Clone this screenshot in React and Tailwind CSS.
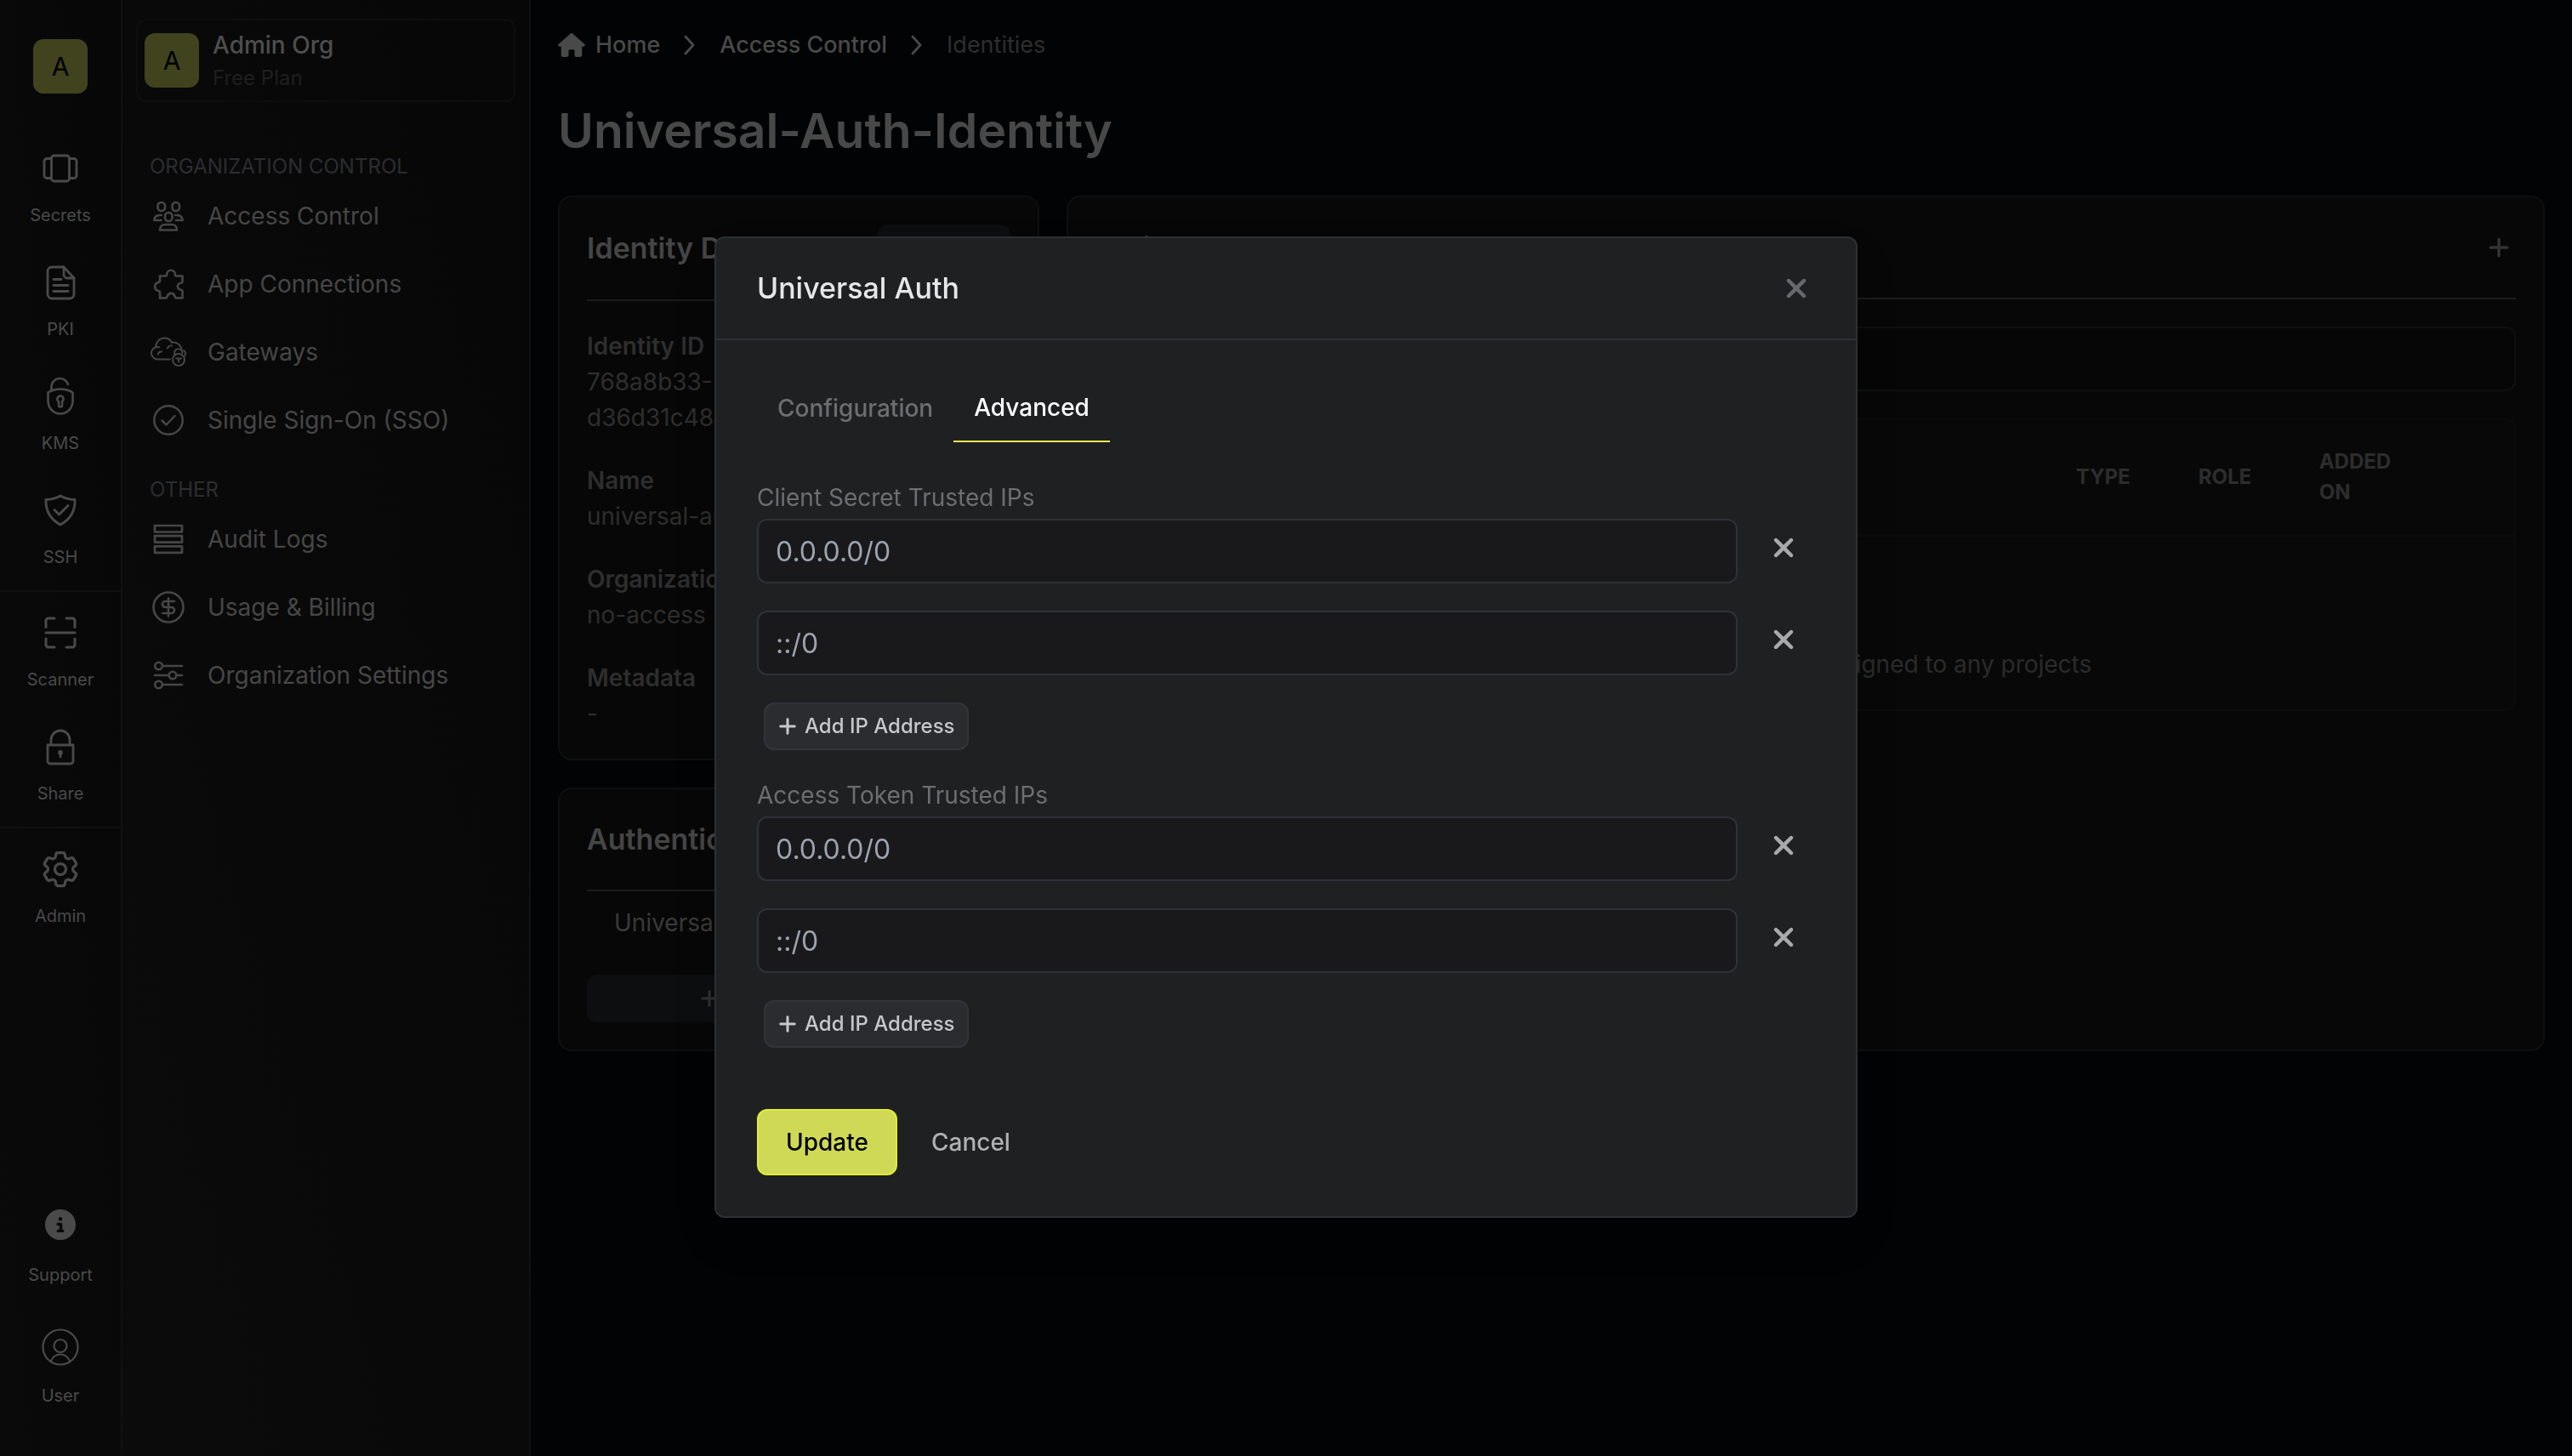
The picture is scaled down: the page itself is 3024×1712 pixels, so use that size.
import { CircleDollarSign } from "lucide-react";
import { FaChevronDown, FaCircleInfo, FaFolder, FaHouse, FaPlus, FaXmark } from "react-icons/fa6";
import { HiOutlineCog6Tooth } from "react-icons/hi2";

/* ---------- Icons ---------- */

const Svg = ({ size = "size-12", box = "0 0 48 48", stroke = 2.8, children }) => (
  <svg
    className={size + " shrink-0"}
    viewBox={box}
    fill="none"
    stroke="currentColor"
    strokeWidth={stroke}
    strokeLinecap="round"
    strokeLinejoin="round"
    aria-hidden="true"
  >
    {children}
  </svg>
);

const SecretsIcon = () => (
  <Svg>
    <rect x="13.5" y="9" width="21" height="30" rx="3" />
    <path d="M13 12.5H8a3 3 0 0 0-3 3v17a3 3 0 0 0 3 3h5M35 12.5h5a3 3 0 0 1 3 3v17a3 3 0 0 1-3 3h-5" />
  </Svg>
);

const PkiIcon = () => (
  <Svg>
    <path d="M28 6H14a5 5 0 0 0-5 5v27a5 5 0 0 0 5 5h21a5 5 0 0 0 5-5V19z" />
    <path d="M28 6v9a4 4 0 0 0 4 4h8M16 20.5h9M16 27.5h17M16 34.5h17" />
  </Svg>
);

const KmsIcon = () => (
  <Svg stroke={2.6}>
    <path d="M13.5 17.5V12A10 10 0 0 1 33 10" />
    <path d="M24 15.5c5 0 10.5 1.5 14.5 4V29c0 9-6.5 15.5-14.5 15.5S9.500 38 9.500 29v-9.500c4-2.500 9.500-4 14.500-4z" />
    <path d="M24 23.5a3.700 3.700 0 0 0-2 6.700v4.300a2 2 0 0 0 4 0v-4.300a3.700 3.700 0 0 0-2-6.700z" />
  </Svg>
);

const SshIcon = () => (
  <Svg>
    <path d="M24 7c5 3 10.500 4.300 17 4.500.5 13-5 23-17 29.500C12 34.500 6.500 24.500 7 11.500 13.500 11.300 19 10 24 7z" />
    <path d="m17 23.500 5.500 5.500L33 18.500" />
  </Svg>
);

const ScannerIcon = () => (
  <Svg stroke={3}>
    <path d="M7 17.500V10a3 3 0 0 1 3-3h7M31 7h7a3 3 0 0 1 3 3v7.500M41 31v7a3 3 0 0 1-3 3h-7M17 41h-7a3 3 0 0 1-3-3v-7M7 24h34" />
  </Svg>
);

const ShareIcon = () => (
  <Svg>
    <path d="M9 22h30v19a3 3 0 0 1-3 3H12a3 3 0 0 1-3-3zM13 22v-6a11 11 0 0 1 22 0v6" />
    <circle cx="24" cy="31" r="1.5" fill="currentColor" />
    <path d="M24 32v4" />
  </Svg>
);

const UserIcon = () => (
  <Svg stroke={2.2} box="0 -2 48 48">
    <circle cx="24" cy="24" r="20.5" />
    <circle cx="24" cy="22.5" r="7.5" />
    <path d="M13 40.500c2-5 6-8 11-8s9 3 11 8" />
  </Svg>
);

const AccessIcon = () => (
  <Svg size="size-9" box="0 0 36 36" stroke={2.6}>
    <rect x="5.5" y="2" width="8.5" height="10" rx="4" />
    <rect x="22.5" y="2" width="8.500" height="10" rx="4" />
    <rect x="14" y="14" width="8.500" height="10" rx="4" />
    <path d="M9.500 23H1.300c.2-4 3-6 7-6h1.500M27 23h7.700c-.2-4-3-6-7-6h-1.500M8 34.500c0-4.500 3-6.500 6.500-6.500h7c3.500 0 6.500 2 6.500 6.500z" />
  </Svg>
);

const AppsIcon = () => (
  <Svg size="size-9" box="0 0 36 36" stroke={2.6}>
    <path d="M8 8.500h6.500c1.200 0 1.700-.8 1.700-2a4.800 4.800 0 0 1 9.600 0c0 1.200.5 2 1.700 2h7V15c0 1-.6 1.500-1.600 1.700a4 4 0 0 0 0 8c1 .2 1.600.7 1.600 1.700v8h-7.500c-1 0-1.200-.8-1.500-2a4.500 4.500 0 0 0-8.800 0c-.3 1.200-.7 2-1.700 2H8V28c0-1.200-.6-1.800-1.700-2a5.100 5.100 0 0 1 0-10c1.100-.2 1.700-.8 1.700-2z" />
  </Svg>
);

const GatewaysIcon = () => (
  <Svg size="h-9 w-[42px]" box="0 0 42 36" stroke={2}>
    <path d="M23 26.500H8.500a7.300 7.300 0 0 1-2.300-14.300C6 7 10 1.500 16.500 1.500c4 0 7 2 8.500 5.300 5.500-1 11 2.700 11.500 8.700" />
    <path d="M9 20.500c0-2 1.500-3 4-3M20 13.500c.5-2 2.500-3.500 5-3M6.200 12.200c1.500-.5 2.500-.4 3.800 0" />
    <path d="M28 21v-2a4.700 4.700 0 0 1 9.400 0" />
    <circle cx="33" cy="27" r="7" />
    <path d="M30 25.500h6M33 25.500v4M40.500 22c1-2 .5-4.500-1.500-6" />
  </Svg>
);

const SsoIcon = () => (
  <Svg size="size-9" box="0 0 36 36" stroke={2.5}>
    <circle cx="18" cy="18" r="16.7" />
    <path d="m10.500 18.500 5 5 10-10.500" />
  </Svg>
);

const AuditIcon = () => (
  <Svg size="size-9" box="0 0 36 36" stroke={2.7}>
    <path d="M2 2h32v7.500H2zM2 14.200h32v7.500H2zM2 26.400h32v7.500H2z" />
  </Svg>
);

const BillingIcon = () => <CircleDollarSign className="size-[42px] shrink-0" strokeWidth={1.5} />;

const SettingsIcon = () => (
  <Svg size="size-9" box="0 0 36 36" stroke={2.6}>
    <circle cx="6.5" cy="7" r="4.3" />
    <circle cx="23" cy="18" r="4.3" />
    <circle cx="6.5" cy="29" r="4.3" />
    <path d="M11.500 7H34M2 18h16M28 18h6M11.500 29H34" />
  </Svg>
);

const CrumbArrow = () => (
  <Svg size="h-6 w-4" box="0 0 16 24">
    <path d="m3 2 9 10-9 10" />
  </Svg>
);

/* ---------- Data ---------- */

const railGroups = [
  [
    { label: "Secrets", Icon: SecretsIcon },
    { label: "PKI", Icon: PkiIcon },
    { label: "KMS", Icon: KmsIcon },
    { label: "SSH", Icon: SshIcon },
  ],
  [
    { label: "Scanner", Icon: ScannerIcon },
    { label: "Share", Icon: ShareIcon },
  ],
  [{ label: "Admin", Icon: () => <HiOutlineCog6Tooth className="size-13" /> }],
];

const menuSections = [
  {
    title: "ORGANIZATION CONTROL",
    items: [
      { label: "Access Control", Icon: AccessIcon },
      { label: "App Connections", Icon: AppsIcon },
      { label: "Gateways", Icon: GatewaysIcon },
      { label: "Single Sign-On (SSO)", Icon: SsoIcon },
    ],
  },
  {
    title: "OTHER",
    items: [
      { label: "Audit Logs", Icon: AuditIcon },
      { label: "Usage & Billing", Icon: BillingIcon },
      { label: "Organization Settings", Icon: SettingsIcon },
    ],
  },
];

const details = [
  { label: "Identity ID", value: "768a8b33-5c1e-4f0a-9b7d-d36d31c48a10" },
  { label: "Name", value: "universal-auth-identity" },
  { label: "Organization Role", value: "no-access" },
  { label: "Metadata", value: "-" },
];

const ipFields = [
  { id: "client-secret", label: "Client Secret Trusted IPs", values: ["0.0.0.0/0", "::/0"] },
  { id: "access-token", label: "Access Token Trusted IPs", values: ["0.0.0.0/0", "::/0"] },
];

/* ---------- Page parts ---------- */

const Avatar = () => (
  <div className="flex size-16 shrink-0 items-center justify-center rounded-xl bg-[#40431d] text-[30px] text-black">
    A
  </div>
);

const Rail = () => (
  <nav className="flex w-36 shrink-0 flex-col border-r-2 border-[#101112] bg-linear-to-tr from-[#0a0a0a] to-[#070708] pt-[46px] pb-9 text-xl leading-[30px] text-[#4a4a4a]">
    <div className="mb-10 flex justify-center">
      <Avatar />
    </div>

    {railGroups.map((group, i) => (
      <div key={i} className="border-b-2 border-[#101112] py-1 last-of-type:border-b-0">
        {group.map(({ label, Icon }) => (
          <a key={label} href="#" className="flex flex-col items-center gap-4 py-5">
            <span className="flex h-12 items-center">
              <Icon />
            </span>
            {label}
          </a>
        ))}
      </div>
    ))}

    <section className="mt-auto">
      <a href="#" className="flex flex-col items-center gap-4 py-5">
        <span className="flex h-14 items-center">
          <FaCircleInfo className="size-9" />
        </span>
        Support
      </a>
      <a href="#" className="flex flex-col items-center gap-4 py-5">
        <span className="flex h-14 items-center">
          <UserIcon />
        </span>
        User
      </a>
    </section>
  </nav>
);

const Sidebar = () => (
  <aside className="w-[480px] shrink-0 border-r-2 border-[#101112] bg-linear-to-tr from-[#0b0b0b] to-[#070708] px-4 pt-[22px]">
    {/* Org switcher */}
    <button className="flex h-[98px] w-full items-center gap-4 rounded-xl border-2 border-[#0e0e0f] px-2 text-left">
      <Avatar />
      <span className="flex flex-col">
        <span className="text-[28px] leading-[42px] font-medium text-[#4e4e4e]">Admin Org</span>
        <span className="text-2xl leading-9 text-[#1f1f1f]">Free Plan</span>
      </span>
    </button>

    <div className="mt-[58px] flex flex-col gap-6">
      {menuSections.map((section) => (
        <div key={section.title}>
          <h2 className="pl-4 text-2xl leading-9 text-[#2c2d30]">{section.title}</h2>
          {section.items.map(({ label, Icon }) => (
            <a key={label} href="#" className="flex h-20 items-center gap-7 pl-5 text-[28px] text-[#464646]">
              <span className="flex w-9 shrink-0 justify-center">
                <Icon />
              </span>
              {label}
            </a>
          ))}
        </div>
      ))}
    </div>
  </aside>
);

const Card = ({ className = "", children }) => (
  <section className={"rounded-2xl border-2 border-[#0e0f0f] bg-[#070707] p-8 " + className}>{children}</section>
);

const CardHeader = ({ title, children }) => (
  <div className="flex items-center justify-between border-b-2 border-[#1c1c1c] pb-8">
    <h3 className="text-[34px] leading-[54px] font-semibold text-[#454545]">{title}</h3>
    {children}
  </div>
);

const ProjectsTable = () => (
  <div className="mt-8 overflow-hidden rounded-xl border-2 border-[#0b0b0c] bg-[#080808]">
    <table className="w-full table-fixed text-left">
      <thead>
        <tr className="h-[136px] border-b-4 border-[#0b0b0c] text-2xl leading-9 text-[#2d2d2d]">
          <th className="w-2/3 px-10 font-bold">NAME</th>
          <th className="w-36 px-10 font-bold">TYPE</th>
          <th className="w-[142px] px-10 font-bold">ROLE</th>
          <th className="px-10 font-bold">ADDED ON</th>
          <th className="w-20" aria-label="Actions" />
        </tr>
      </thead>
      <tbody>
        <tr>
          <td colSpan={5}>
            <div className="flex flex-col items-center gap-6 px-8 pt-12 pb-8 text-[28px] leading-[42px] text-[#2b2b2b]">
              <FaFolder className="size-14" />
              This identity has not been assigned to any projects
            </div>
          </td>
        </tr>
      </tbody>
    </table>
  </div>
);

const IdentityPage = () => (
  <main className="min-w-0 flex-1 px-8 pt-8">
    {/* Breadcrumb */}
    <nav className="flex h-[42px] items-center gap-[27px] text-[27px] font-medium text-[#494949]">
      <a href="#" className="flex items-center gap-3">
        <FaHouse className="h-7 w-8" />
        Home
      </a>
      <CrumbArrow />
      <a href="#">Access Control</a>
      <CrumbArrow />
      <span className="font-normal text-[#2e2e2e]">Identities</span>
    </nav>

    <h1 className="mt-11 text-[57px] leading-[72px] font-semibold text-[#484848]">Universal-Auth-Identity</h1>

    <div className="mt-10 flex gap-8">
      <div className="flex w-[566px] shrink-0 flex-col gap-8">
        <Card>
          <CardHeader title="Identity Details">
            <button className="flex h-14 items-center gap-3 rounded-xl bg-[#0c0e0f] px-5 text-2xl text-[#3a3a3a]">
              Options
              <FaChevronDown className="size-4" />
            </button>
          </CardHeader>
          <dl className="mt-8 flex flex-col gap-8 text-[28px] leading-[42px] text-[#2e2e2e]">
            {details.map(({ label, value }) => (
              <div key={label}>
                <dt className="font-semibold">{label}</dt>
                <dd>{value}</dd>
              </div>
            ))}
          </dl>
        </Card>

        <Card>
          <CardHeader title="Authentication" />
          <p className="px-8 pt-4 text-[28px] leading-[42px] text-[#3a3a3a]">Universal Auth</p>
          <button className="mt-10 flex h-14 w-full items-center justify-center gap-2 rounded-xl bg-[#0c0e0f] text-2xl font-medium text-[#303030]">
            <FaPlus className="size-6" />
            Add Auth Method
          </button>
        </Card>
      </div>

      <Card className="min-w-0 flex-1">
        <CardHeader title="Projects">
          <button aria-label="Add project" className="flex w-10 justify-center text-[#333333]">
            <FaPlus className="size-7" />
          </button>
        </CardHeader>
        <input
          aria-label="Search projects"
          className="mt-8 block h-[76px] w-full rounded-xl border-2 border-[#0e0f10] bg-[#060607] px-6 text-[28px]"
        />
        <ProjectsTable />
      </Card>
    </div>
  </main>
);

/* ---------- Modal ---------- */

const IpFieldGroup = ({ id, label, values }) => (
  <div>
    <label htmlFor={id + "-0"} className="mb-1 block text-[28px] leading-[42px] text-[#6c6e70]">
      {label}
    </label>
    <div className="flex flex-col gap-8">
      {values.map((value, i) => (
        <div key={i} className="flex items-start gap-4">
          <input
            id={id + "-" + i}
            aria-label={i > 0 ? label + " " + (i + 1) : undefined}
            defaultValue={value}
            className="h-[76px] min-w-0 flex-1 rounded-xl border-2 border-[#2f3137] bg-[#19191b] px-5 text-[32px] text-[#9ca3af]"
          />
          <button type="button" aria-label="Remove IP address" className="flex h-[68px] w-[75px] items-center justify-center text-[#a9aaac]">
            <FaXmark className="size-9" />
          </button>
        </div>
      ))}
    </div>
    <button
      type="button"
      className="mt-8 ml-2 flex h-14 items-center gap-2 rounded-xl border-2 border-[#32343a] bg-[#2b2c30] px-[14px] text-2xl font-medium text-[#c6c7c9]"
    >
      <FaPlus className="size-6" />
      Add IP Address
    </button>
  </div>
);

const UniversalAuthModal = () => (
  <div className="fixed inset-0 flex items-center justify-center pb-0.5">
    <div role="dialog" aria-labelledby="modal-title" className="w-full max-w-[1344px] rounded-xl border-2 border-[#2d2f32] bg-[#1f2022] shadow-2xl">
      {/* Header */}
      <div className="flex items-center justify-between border-b-2 border-[#2d2f32] px-12 py-8">
        <h2 id="modal-title" className="text-[34px] leading-[54px] font-medium text-[#e6e7e9]">
          Universal Auth
        </h2>
        <button aria-label="Close" className="mr-1 text-[#68696c]">
          <FaXmark className="size-9" />
        </button>
      </div>

      <form className="px-12 pt-10 pb-12">
        <div role="tablist" className="mb-11 flex text-[28px] font-medium">
          <button type="button" role="tab" aria-selected="false" className="h-20 px-6 text-[#6c6e70]">
            Configuration
          </button>
          <button type="button" role="tab" aria-selected="true" className="h-20 border-b-2 border-[#e6ee4e] px-6 text-white">
            Advanced
          </button>
        </div>

        <div className="flex flex-col gap-8">
          {ipFields.map((field) => (
            <IpFieldGroup key={field.id} {...field} />
          ))}
        </div>

        {/* Actions */}
        <div className="mt-[72px] flex items-center gap-10 text-[28px] font-medium">
          <button type="submit" className="h-[78px] rounded-xl border-2 border-[#e0ed34] bg-[#cfd955] px-8 text-black">
            Update
          </button>
          <button type="button" className="text-[#b0b1b3]">
            Cancel
          </button>
        </div>
      </form>
    </div>
  </div>
);

const App = () => {
  return (
    <div className="flex min-h-screen bg-[#020304] font-['Inter',sans-serif]">
      <Rail />
      <Sidebar />
      <IdentityPage />
      <UniversalAuthModal />
    </div>
  );
};

export default App;
